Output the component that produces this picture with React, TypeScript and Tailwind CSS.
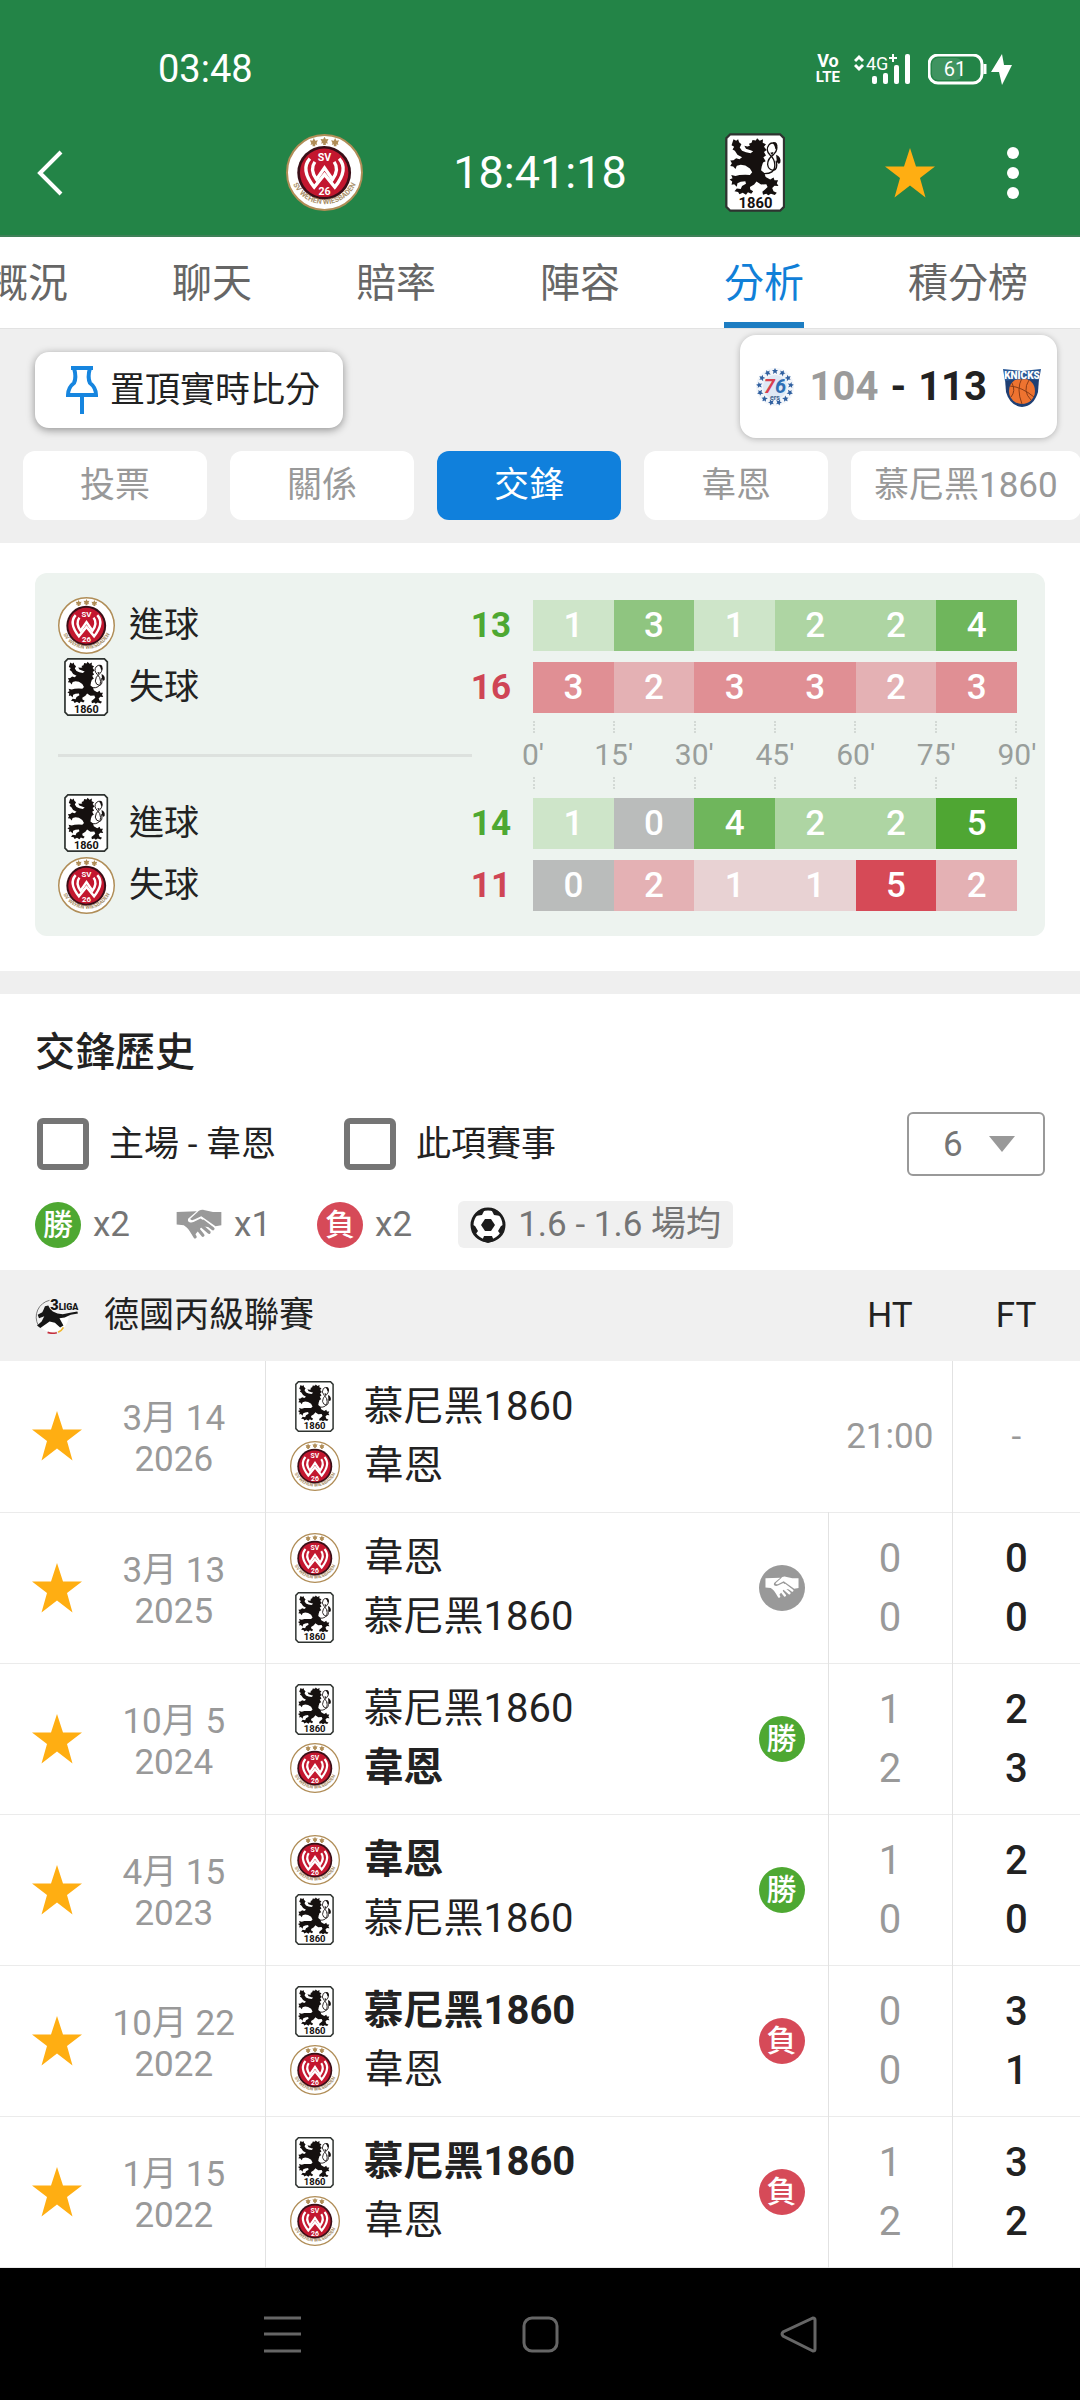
import React from "react";

type Team = "wehen" | "munich";
type Result = "win" | "draw" | "loss" | null;

const TEAM_NAMES: Record<Team, string> = { wehen: "韋恩", munich: "慕尼黑1860" };

function WehenCrest({ className }: { className: string }) {
  return (
    <svg viewBox="46 44 232 232" className={className} aria-hidden="true">
      <defs>
        <path id="crest-arc" d="M59 166 A104 104 0 0 0 265 166" />
      </defs>
      <circle cx="162" cy="160" r="113" fill="#fff" stroke="#b08d57" strokeWidth="6" />
      <circle cx="161" cy="161" r="81" fill="#3a0f18" />
      <circle cx="161" cy="161" r="73" fill="#c3172f" />
      <g fill="#b08d57">
        {[130, 162, 194].map((x, i) => (
          <path
            key={x}
            transform={`translate(${x} ${i === 1 ? 65 : 69})`}
            d="M0-13 L4-5 L12-6 L8 2 L10 8 L4 6 L4 12 H-4 L-4 6 L-10 8 L-8 2 L-12-6 L-4-5Z"
          />
        ))}
      </g>
      <g fill="none" stroke="#fff" strokeWidth="10" strokeLinejoin="miter">
        <path d="M118 118 C98 140 102 168 131 204 L162 166 L193 204 C222 168 226 140 206 118" />
        <path d="M133 128 C120 146 124 162 138 181 L162 146 L186 181 C200 162 204 146 191 128" />
      </g>
      <text x="162" y="124" textAnchor="middle" fontSize="32" fontWeight="700" fill="#fff" fontFamily="Roboto, sans-serif">SV</text>
      <text x="162" y="228" textAnchor="middle" fontSize="32" fontWeight="700" fill="#fff" fontFamily="Roboto, sans-serif">26</text>
      <text fontSize="22" fontWeight="700" fill="#a9906a" fontFamily="Roboto, sans-serif">
        <textPath href="#crest-arc" startOffset="50%" textAnchor="middle">SV WEHEN WIESBADEN</textPath>
      </text>
    </svg>
  );
}

function LionCrest({ className }: { className: string }) {
  return (
    <svg viewBox="74 38 184 241" className={className} aria-hidden="true">
      <path d="M90 42 H242 L254 54 V263 L242 275 H90 L78 263 V54Z" fill="#fff" stroke="#2e3330" strokeWidth="7" />
      <path
        fill="#15100f"
        d="M97 66 L100 57 L108 62 L114 57 L117 66 L124 72 L119 82 L126 92 L138 97 L152 100 L160 94 L152 91 L138 86 L133 77 L142 79 L150 77 L147 71 L155 68 L158 59 L168 61 L172 54 L180 62 L190 57 L189 68 L199 72 L193 80 L201 90 L193 96 L199 107 L191 112 L198 124 L190 128 L186 140 L184 152 L194 160 L198 172 L212 180 L222 174 L225 182 L236 182 L232 191 L237 200 L225 199 L218 206 L222 216 L232 220 L226 227 L214 223 L206 228 L200 223 L190 226 L188 217 L196 210 L204 203 L200 194 L184 195 L170 186 L163 195 L150 203 L151 210 L160 216 L154 223 L144 219 L138 226 L128 220 L118 225 L114 218 L103 216 L110 207 L122 209 L126 200 L138 193 L136 185 L122 187 L112 191 L110 202 L102 194 L94 196 L96 186 L88 180 L97 176 L93 166 L106 169 L118 166 L136 165 L150 166 L157 158 L150 146 L136 137 L122 135 L110 138 L106 148 L99 140 L90 139 L95 130 L90 122 L100 121 L108 115 L118 118 L126 112 L112 104 L104 92 L97 88 L102 80 L94 75Z"
      />
      <path
        fill="none"
        stroke="#15100f"
        strokeWidth="4"
        d="M190 162 Q226 164 226 136 Q226 118 212 106 Q196 90 208 74 Q216 64 226 72 Q240 86 222 104 Q204 116 204 134 Q206 150 222 152 Q236 148 230 122"
      />
      <path d="M220 66 Q236 64 234 84 Q228 94 226 80Z M230 104 Q246 110 243 128 Q236 138 232 124Z M212 98 L222 96 L218 106Z" fill="#15100f" />
      <text x="167" y="266" textAnchor="middle" fontSize="45" fontWeight="700" fill="#15100f" fontFamily="Roboto, sans-serif">1860</text>
    </svg>
  );
}

function Crest({ team, big, small }: { team: Team; big?: boolean; small?: boolean }) {
  const box = big ? "h-[79px] w-[77px]" : small ? "h-[51px] w-[50px]" : "h-[58px] w-[57px]";
  return (
    <span className={`flex flex-none items-center justify-center ${box}`}>
      {team === "wehen" ? <WehenCrest className="w-full" /> : <LionCrest className="h-full" />}
    </span>
  );
}

function Star() {
  return (
    <svg viewBox="0 0 50 50" className="size-[50px]" aria-hidden="true">
      <path d="M25 0 L31 18.500 L50 18.500 L35 30 L40.500 49.500 L25 37.500 L9.500 49.500 L15 30 L0 18.500 L19 18.500Z" fill="#ffae12" />
    </svg>
  );
}

function Handshake({ className }: { className: string }) {
  return (
    <svg viewBox="526 88 142 96" className={className} aria-hidden="true">
      <path fill="currentColor" d="M528 97 L590 95 L564 117 C559 127 570 132 580 128 L602 117 L640 144 L606 142 L584 168 L558 144 L550 138 L528 136Z" />
      <path fill="currentColor" d="M666 97 L640 97 L612 91 C602 89 596 94 592 98 L570 118 C572 124 578 123 584 120 L604 110 L648 141 L666 138Z" />
      <g stroke="currentColor" strokeWidth="10" strokeLinecap="round">
        <path d="M610 126 L640 149" />
        <path d="M596 132 L628 160" />
        <path d="M584 138 L609 169" />
        <path d="M566 143 L585 174" />
      </g>
    </svg>
  );
}

function Badge({ result }: { result: Result }) {
  if (result === "win")
    return <span className="flex size-[46px] items-center justify-center rounded-full bg-[#4ea832] text-[30px] font-medium leading-none text-white">勝</span>;
  if (result === "loss")
    return <span className="flex size-[46px] items-center justify-center rounded-full bg-[#d64a58] text-[30px] font-medium leading-none text-white">負</span>;
  if (result === "draw")
    return (
      <span className="flex size-[46px] items-center justify-center rounded-full bg-[#999] text-white">
        <Handshake className="w-[34px]" />
      </span>
    );
  return null;
}

function Header() {
  return (
    <header className="border-b-2 border-[#3f8058] bg-[#238447] text-white">
      <div className="flex h-[110px] items-center justify-between pt-7 pr-[68px] pl-[158px]">
        <span className="text-[38px] leading-none">03:48</span>
        <div className="flex items-center gap-[14px]">
          <span className="flex flex-col items-center text-[18px] leading-4 font-bold" aria-label="VoLTE">
            <span>Vo</span>
            <span className="text-[15px]">LTE</span>
          </span>
          <svg viewBox="0 0 60 32" className="h-8 w-[60px]" aria-label="4G" fill="#fff" fontFamily="Roboto, sans-serif">
            <path d="M1 8 L5 4 L9 8 M1 12 L5 16 L9 12" fill="none" stroke="#fff" strokeWidth="3" />
            <text x="12" y="17" fontSize="18">4G</text>
            <path d="M35 5 H43 M39 1 V9" stroke="#fff" strokeWidth="2" />
            <rect x="18" y="23" width="5" height="8" rx="2" />
            <rect x="29" y="20" width="5" height="11" rx="2" />
            <rect x="40" y="12" width="5" height="19" rx="2" />
            <rect x="51" y="1" width="5" height="30" rx="2" />
          </svg>
          <svg viewBox="0 0 84 31" className="h-[31px] w-[84px]" aria-label="61%" fill="#fff">
            <rect x="1" y="1" width="53" height="28" rx="9" fill="#238447" stroke="#fff" strokeWidth="3" />
            <rect x="4" y="4" width="30" height="22" rx="6" fill="#3f9360" />
            <path d="M57 10 V20" stroke="#fff" strokeWidth="3" />
            <text x="27" y="22" fontSize="20" textAnchor="middle" fontFamily="Roboto, sans-serif">61</text>
            <path d="M74 0 L63 18 H71 L74 31 L84 11 H76Z" />
          </svg>
        </div>
      </div>
      <div className="grid h-[125px] grid-cols-[1fr_auto_1fr] items-center pr-[61px] pl-9">
        <button aria-label="返回" className="justify-self-start">
          <svg viewBox="0 0 28 46" className="h-[46px] w-7">
            <path d="M25 2 L4 23 L25 44" fill="none" stroke="#fff" strokeWidth="4" />
          </svg>
        </button>
        <div className="-mr-[25px] flex items-center gap-[90px]">
          <Crest team="wehen" big />
          <span className="text-[45px] leading-none">18:41:18</span>
          <Crest team="munich" big />
        </div>
        <div className="flex items-center justify-end gap-[72px]">
          <button aria-label="收藏"><Star /></button>
          <button aria-label="更多">
            <svg viewBox="0 0 12 54" className="h-[54px] w-3" fill="#fff">
              <circle cx="6" cy="7" r="6" />
              <circle cx="6" cy="27" r="6" />
              <circle cx="6" cy="47" r="6" />
            </svg>
          </button>
        </div>
      </div>
    </header>
  );
}

function Tabs() {
  const tabs = ["概況", "聊天", "賠率", "陣容", "分析", "積分榜"];
  return (
    <nav className="overflow-hidden border-b border-[#e2e2e2] bg-white">
      <div className="-ml-3 flex gap-[104px]">
        {tabs.map((t) => (
          <button
            key={t}
            className={
              t === "分析"
                ? "h-[91px] flex-none border-b-6 border-[#1d7dc2] pt-2 text-[40px] leading-none text-[#1080d8]"
                : "h-[91px] flex-none pt-0.5 text-[40px] leading-none text-[#666]"
            }
          >
            {t}
          </button>
        ))}
      </div>
    </nav>
  );
}

function SixersLogo() {
  return (
    <svg viewBox="0 0 40 40" className="size-10" aria-hidden="true">
      <circle cx="20" cy="20" r="19" fill="#f3f6fa" />
      <circle cx="20" cy="20" r="12" fill="#dfe9f5" />
      {Array.from({ length: 13 }, (_, i) => (
        <path
          key={i}
          transform={`rotate(${(i * 360) / 13} 20 20) translate(20 4)`}
          d="M0-3 L1-1 L3-1 L1.500 0.500 L2 3 L0 1.500 L-2 3 L-1.500 0.500 L-3-1 L-1-1Z"
          fill="#2f5f9f"
        />
      ))}
      <text x="20" y="26" fontSize="20" fontWeight="700" fontStyle="italic" textAnchor="middle" fontFamily="Roboto, sans-serif" fill="#2e6fb5">
        <tspan fill="#d8404f">7</tspan>6
      </text>
      <text x="20" y="33" fontSize="7" fontWeight="700" textAnchor="middle" fontFamily="Roboto, sans-serif" fill="#41648f">ers</text>
    </svg>
  );
}

function KnicksLogo() {
  return (
    <svg viewBox="0 0 40 42" className="h-[42px] w-10" aria-hidden="true">
      <path d="M3 13 L37 13 L36 26 Q32 40 20 41 Q8 40 4 26Z" fill="#1f3f73" />
      <circle cx="20" cy="25" r="13" fill="#ee7330" />
      <path d="M8 20 Q20 21 32 31 M20 12 Q14 23 20 38 M27 14 Q20 25 29 34 M9 31 Q14 25 10 17" fill="none" stroke="#8a3c17" strokeWidth="1" />
      <path d="M1 3 L20 5 L39 3 L37 14 Q20 12 3 15Z" fill="#2b5a97" />
      <text x="20" y="13" fontSize="10" fontWeight="900" textAnchor="middle" fontFamily="Roboto, sans-serif" fill="#fff">KNICKS</text>
    </svg>
  );
}

function Toolbar() {
  const chips = ["投票", "關係", "交鋒", "韋恩", "慕尼黑1860"];
  return (
    <section className="relative bg-[#efefef] py-[23px]">
      <button className="ml-[35px] flex h-[76px] items-center gap-3 rounded-[14px] bg-white pr-[23px] pl-[31px] text-[35px] leading-none text-[#222] shadow-[0_2px_8px_rgba(0,0,0,0.4)]">
        <svg viewBox="0 0 32 50" className="h-[50px] w-8" aria-hidden="true">
          <path d="M5 3 H27 M8 3 C10 10 10 14 8 18 C4 21 2 25 2 30 H30 C30 25 28 21 24 18 C22 14 22 10 24 3" fill="none" stroke="#1685df" strokeWidth="4" />
          <path d="M16 30 V49" stroke="#1685df" strokeWidth="4" />
        </svg>
        置頂實時比分
      </button>
      <div className="absolute top-1.5 right-[23px] flex h-[103px] items-center rounded-2xl bg-white px-[15px] shadow-[0_1px_6px_rgba(0,0,0,0.25)]">
        <SixersLogo />
        <div className="mx-[15px] flex gap-3 text-[40px] leading-none font-bold text-[#222]">
          <span className="text-[#9b9b9b]">104</span>
          <span>-</span>
          <span>113</span>
        </div>
        <KnicksLogo />
      </div>
      <div className="mt-[23px] flex gap-[23px] overflow-hidden pl-[23px]">
        {chips.map((c) => (
          <button
            key={c}
            className={
              c === "交鋒"
                ? "h-[69px] min-w-[184px] flex-none rounded-xl bg-[#1080dc] px-[23px] text-[35px] leading-none text-white"
                : "h-[69px] min-w-[184px] flex-none rounded-xl bg-white px-[23px] text-[35px] leading-none text-[#999]"
            }
          >
            {c}
          </button>
        ))}
      </div>
    </section>
  );
}

const GOAL_BG = ["bg-[#babcbb]", "bg-[#cee5c9]", "bg-[#aed5a3]", "bg-[#8fc580]", "bg-[#6fb65c]", "bg-[#4fa633]"];
const LOST_BG = ["bg-[#babcbb]", "bg-[#e8d2d3]", "bg-[#e4b1b4]", "bg-[#e08f94]", "bg-[#db6d76]", "bg-[#d64a57]"];

function HeatRow({ team, kind, total, cells }: { team: Team; kind: "goal" | "lost"; total: number; cells: number[] }) {
  const palette = kind === "goal" ? GOAL_BG : LOST_BG;
  return (
    <div className="grid h-[62px] grid-cols-[475fr_484fr] items-center">
      <div className="flex items-center pr-[22px]">
        <Crest team={team} />
        <span className="ml-3.5 text-[35px] leading-none text-[#222]">{kind === "goal" ? "進球" : "失球"}</span>
        <span className={`ml-auto text-[35px] leading-none font-bold ${kind === "goal" ? "text-[#4ea832]" : "text-[#cf4555]"}`}>{total}</span>
      </div>
      <div className="grid grid-cols-6">
        {cells.map((v, i) => (
          <span key={i} className={`flex h-[51px] items-center justify-center text-[35px] leading-none font-medium text-white ${palette[v]}`}>
            {v}
          </span>
        ))}
      </div>
    </div>
  );
}

function Ticks() {
  return (
    <div className="flex justify-between">
      {[0, 1, 2, 3, 4, 5, 6].map((i) => (
        <span key={i} className="h-3 w-0 border-l-2 border-dotted border-[#d3d9d5]" />
      ))}
    </div>
  );
}

function GoalPanel() {
  return (
    <section className="bg-white px-[35px] pt-[30px] pb-[35px]">
      <div className="rounded-xl bg-[#edf3ef] pt-[21px] pr-7 pb-5 pl-[23px]">
        <HeatRow team="wehen" kind="goal" total={13} cells={[1, 3, 1, 2, 2, 4]} />
        <HeatRow team="munich" kind="lost" total={16} cells={[3, 2, 3, 3, 2, 3]} />
        <div className="grid h-[74px] grid-cols-[475fr_484fr] items-center">
          <div className="mr-[61px] h-[3px] bg-[#dde1de]" />
          <div>
            <Ticks />
            <div className="flex justify-between py-1 text-[30px] leading-9 text-[#999e9b]">
              {[0, 15, 30, 45, 60, 75, 90].map((m) => (
                <span key={m} className="flex w-0 justify-center">{m}'</span>
              ))}
            </div>
            <Ticks />
          </div>
        </div>
        <HeatRow team="munich" kind="goal" total={14} cells={[1, 0, 4, 2, 2, 5]} />
        <HeatRow team="wehen" kind="lost" total={11} cells={[0, 2, 1, 1, 5, 2]} />
      </div>
    </section>
  );
}

function CheckOption({ label }: { label: string }) {
  return (
    <label className="flex items-center gap-5 text-[35px] leading-none text-[#222]">
      <input type="checkbox" className="size-[52px] appearance-none rounded-md border-6 border-[#757575] bg-white checked:bg-[#1080dc]" />
      {label}
    </label>
  );
}

function Football() {
  return (
    <svg viewBox="0 0 36 36" className="size-9" aria-hidden="true">
      <circle cx="18" cy="18" r="16" fill="#fff" stroke="#1c1c1c" strokeWidth="3" />
      <g fill="#1c1c1c">
        <path d="M15 12 H21 L25 18 L21 24 H15 L11 18Z" />
        <path d="M8 4 L15 2 L12 8 L5 9Z" />
        <path d="M28 4 L21 2 L24 8 L31 9Z" />
        <path d="M1 17 L5 19 L8 24 L5 28 L2 24Z" />
        <path d="M35 17 L31 19 L28 24 L31 28 L34 24Z" />
        <path d="M14 29 H22 L24 34 L18 36 L12 34Z" />
      </g>
    </svg>
  );
}

function LigaLogo() {
  return (
    <svg viewBox="106 350 136 112" className="h-[37px] w-[45px] flex-none" aria-hidden="true">
      <path d="M150 360 A52 52 0 0 0 116 436" fill="none" stroke="#777" strokeWidth="3" />
      <path d="M118 436 Q146 470 190 446 Q206 432 208 408 L170 404 L140 430Z" fill="#fff" />
      <path d="M144 457 Q158 462 172 458" fill="none" stroke="#c5303e" strokeWidth="5" />
      <path d="M176 457 Q186 453 192 442" fill="none" stroke="#f0b62c" strokeWidth="5" />
      <path
        fill="#161616"
        d="M132 388 L136 378 L146 376 L152 386 L160 394 L174 400 L190 402 L212 398 L234 394 L236 400 L214 404 L196 412 L180 414 L192 436 L182 442 L166 428 L150 424 L136 434 L122 444 L112 436 L126 424 L134 408 L118 414 L114 404 L128 396Z"
      />
      <text x="152" y="388" fontSize="44" fontWeight="900" fill="#161616" fontFamily="Roboto, sans-serif">
        3<tspan fontSize="27">LIGA</tspan>
      </text>
    </svg>
  );
}

function Filters() {
  return (
    <section className="border-t-[23px] border-[#efefef] bg-white px-[35px] pt-[38px] pb-[22px]">
      <h2 className="text-[40px] leading-[42px] font-medium text-[#222]">交鋒歷史</h2>
      <div className="mt-[38px] flex h-16 items-center gap-[68px] pl-0.5">
        <CheckOption label="主場 - 韋恩" />
        <CheckOption label="此項賽事" />
        <div className="relative ml-auto">
          <select aria-label="場數" defaultValue="6" className="h-16 w-[138px] appearance-none rounded-md border-2 border-[#999] bg-white pl-[34px] text-[35px] leading-none text-[#757575]">
            <option>6</option>
            <option>10</option>
            <option>20</option>
          </select>
          <svg viewBox="0 0 26 16" className="pointer-events-none absolute top-6 right-[30px] h-4 w-[26px]" aria-hidden="true">
            <path d="M0 0 H26 L13 16Z" fill="#999" />
          </svg>
        </div>
      </div>
      <div className="mt-[25px] flex items-center gap-[46px] text-[35px] leading-none text-[#757575]">
        <span className="flex items-center gap-3"><Badge result="win" />x2</span>
        <span className="flex items-center gap-3"><Handshake className="w-[46px] text-[#999]" />x1</span>
        <span className="flex items-center gap-3"><Badge result="loss" />x2</span>
        <span className="flex h-[47px] items-center gap-3 rounded-md bg-[#f0f0f0] px-3">
          <Football />1.6 - 1.6 場均
        </span>
      </div>
    </section>
  );
}

interface Match {
  date: string;
  year: string;
  home: Team;
  away: Team;
  result: Result;
  ht: number[] | null;
  ft: number[] | null;
}

const MATCHES: Match[] = [
  { date: "3月 14", year: "2026", home: "munich", away: "wehen", result: null, ht: null, ft: null },
  { date: "3月 13", year: "2025", home: "wehen", away: "munich", result: "draw", ht: [0, 0], ft: [0, 0] },
  { date: "10月 5", year: "2024", home: "munich", away: "wehen", result: "win", ht: [1, 2], ft: [2, 3] },
  { date: "4月 15", year: "2023", home: "wehen", away: "munich", result: "win", ht: [1, 0], ft: [2, 0] },
  { date: "10月 22", year: "2022", home: "munich", away: "wehen", result: "loss", ht: [0, 0], ft: [3, 1] },
  { date: "1月 15", year: "2022", home: "munich", away: "wehen", result: "loss", ht: [1, 2], ft: [3, 2] },
];

function TeamLine({ team, winner }: { team: Team; winner: boolean }) {
  return (
    <div className="flex h-[59px] items-center gap-6">
      <Crest team={team} small />
      <span className={winner ? "font-bold" : "font-normal"}>{TEAM_NAMES[team]}</span>
    </div>
  );
}

function HistoryTable() {
  return (
    <table className="w-full table-fixed border-collapse bg-white text-center">
      <colgroup>
        <col className="w-[83px]" />
        <col className="w-[182px]" />
        <col />
        <col className="w-[124px]" />
        <col className="w-[128px]" />
      </colgroup>
      <thead className="bg-[#f0f0f0] text-[35px] leading-none text-[#222]">
        <tr className="h-[91px]">
          <th colSpan={3} className="p-0 pl-[35px] font-normal">
            <span className="flex items-center gap-6"><LigaLogo />德國丙級聯賽</span>
          </th>
          <th className="p-0 font-normal">HT</th>
          <th className="p-0 font-normal">FT</th>
        </tr>
      </thead>
      <tbody>
        {MATCHES.map((m, i) => (
          <tr key={i} className="h-[151px] border-b border-[#ebebeb]">
            <td className="p-0 pl-8"><button aria-label="收藏" className="block"><Star /></button></td>
            <td className="border-r border-[#e2e2e2] p-0 pt-1.5 text-[35px] leading-[41px] text-[#999]">
              {m.date}
              <br />
              {m.year}
            </td>
            <td className="p-0 pr-[23px] pl-6">
              <div className="flex items-center justify-between text-[40px] leading-none text-[#222]">
                <div>
                  <TeamLine team={m.home} winner={!!m.ft && m.ft[0] > m.ft[1]} />
                  <TeamLine team={m.away} winner={!!m.ft && m.ft[1] > m.ft[0]} />
                </div>
                <Badge result={m.result} />
              </div>
            </td>
            {m.ht ? (
              <td className="border-l border-[#e2e2e2] p-0 text-[40px] leading-[59px] text-[#999]">
                {m.ht[0]}
                <br />
                {m.ht[1]}
              </td>
            ) : (
              <td className="p-0 text-[35px] leading-none text-[#999]">21:00</td>
            )}
            {m.ft ? (
              <td className="border-l border-[#e2e2e2] p-0 text-[40px] leading-[59px] font-medium text-[#222]">
                {m.ft[0]}
                <br />
                {m.ft[1]}
              </td>
            ) : (
              <td className="border-l border-[#e2e2e2] p-0 text-[35px] leading-none text-[#999]">-</td>
            )}
          </tr>
        ))}
      </tbody>
    </table>
  );
}

function SystemNav() {
  return (
    <nav className="flex items-center justify-center gap-[221px] bg-black py-12">
      <button aria-label="最近">
        <svg viewBox="0 0 37 37" className="size-[37px]" stroke="#666" strokeWidth="3">
          <path d="M0 2 H37 M0 18 H37 M0 35 H37" />
        </svg>
      </button>
      <button aria-label="主畫面">
        <svg viewBox="0 0 37 37" className="size-[37px]" fill="none" stroke="#666" strokeWidth="3">
          <rect x="2" y="2" width="33" height="33" rx="8" />
        </svg>
      </button>
      <button aria-label="返回上一頁">
        <svg viewBox="0 0 37 37" className="size-[37px]" fill="none" stroke="#666" strokeWidth="3">
          <path d="M33 2 Q35 2 35 4 V33 Q35 35 33 35 L3 20 Q1 18 3 16Z" />
        </svg>
      </button>
    </nav>
  );
}

export default function App() {
  return (
    <div lang="zh-Hant" className="min-h-screen bg-black font-['Roboto','Noto_Sans_CJK_TC',sans-serif]">
      <Header />
      <Tabs />
      <Toolbar />
      <GoalPanel />
      <Filters />
      <HistoryTable />
      <SystemNav />
    </div>
  );
}
